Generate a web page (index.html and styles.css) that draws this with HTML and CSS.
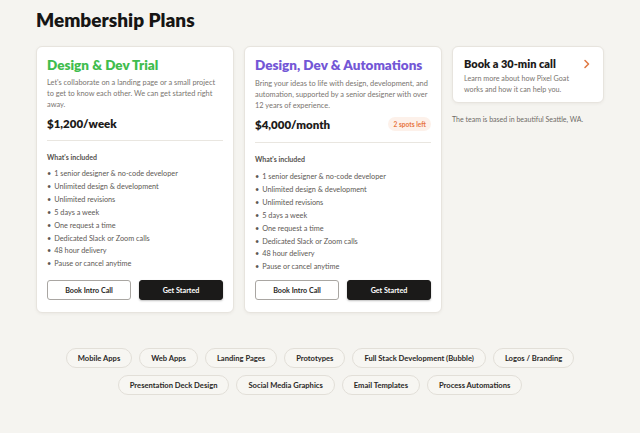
FILE: index.html
```html
<!DOCTYPE html>
<html lang="en">
<head>
<meta charset="utf-8">
<title>Membership Plans</title>
<link rel="stylesheet" href="styles.css">
</head>
<body>
<main class="page">
  <h1 class="page-title">Membership Plans</h1>
  <section class="plans">
    <article class="card plan">
      <h2 class="plan-name green">Design &amp; Dev Trial</h2>
      <p class="plan-desc">Let's collaborate on a landing page or a small project to get to know each other. We can get started right away.</p>
      <div class="price-row">
        <span class="price">$1,200/week</span>
      </div>
      <hr class="divider">
      <h3 class="incl">What's included</h3>
      <ul class="features">
        <li>1 senior designer &amp; no-code developer</li>
        <li>Unlimited design &amp; development</li>
        <li>Unlimited revisions</li>
        <li>5 days a week</li>
        <li>One request a time</li>
        <li>Dedicated Slack or Zoom calls</li>
        <li>48 hour delivery</li>
        <li>Pause or cancel anytime</li>
      </ul>
      <div class="actions">
        <button class="btn btn-outline">Book Intro Call</button>
        <button class="btn btn-dark">Get Started</button>
      </div>
    </article>
    <article class="card plan plan-featured">
      <h2 class="plan-name purple">Design, Dev &amp; Automations</h2>
      <p class="plan-desc">Bring your ideas to life with design, development, and automation, supported by a senior designer with over 12 years of experience.</p>
      <div class="price-row">
        <span class="price">$4,000/month</span>
        <span class="badge">2 spots left</span>
      </div>
      <hr class="divider">
      <h3 class="incl">What's included</h3>
      <ul class="features">
        <li>1 senior designer &amp; no-code developer</li>
        <li>Unlimited design &amp; development</li>
        <li>Unlimited revisions</li>
        <li>5 days a week</li>
        <li>One request a time</li>
        <li>Dedicated Slack or Zoom calls</li>
        <li>48 hour delivery</li>
        <li>Pause or cancel anytime</li>
      </ul>
      <div class="actions">
        <button class="btn btn-outline">Book Intro Call</button>
        <button class="btn btn-dark">Get Started</button>
      </div>
    </article>
    <aside class="side">
      <a class="card call" href="#">
        <div class="call-head">
          <span class="call-title">Book a 30-min call</span>
          <svg class="chev" width="8" height="10" viewBox="0 0 8 10" aria-hidden="true"><path d="M2 1.5 L5.5 5 L2 8.5" fill="none" stroke="#e07a45" stroke-width="1.6" stroke-linecap="round" stroke-linejoin="round"/></svg>
        </div>
        <p class="call-desc">Learn more about how Pixel Goat works and how it can help you.</p>
      </a>
      <p class="note">The team is based in beautiful Seattle, WA.</p>
    </aside>
  </section>
  <section class="tags">
    <div class="tag-row">
      <span class="tag">Mobile Apps</span>
      <span class="tag">Web Apps</span>
      <span class="tag">Landing Pages</span>
      <span class="tag">Prototypes</span>
      <span class="tag">Full Stack Development (Bubble)</span>
      <span class="tag">Logos / Branding</span>
    </div>
    <div class="tag-row">
      <span class="tag">Presentation Deck Design</span>
      <span class="tag">Social Media Graphics</span>
      <span class="tag">Email Templates</span>
      <span class="tag">Process Automations</span>
    </div>
  </section>
</main>
</body>
</html>
```
FILE: styles.css
```css
* { box-sizing: border-box; }
html, body { margin: 0; padding: 0; }
body {
  background: #f5f4f0;
  font-family: Lato, "Open Sans", sans-serif;
  color: #1d1b1a;
  width: 640px;
  height: 433px;
  overflow: hidden;
}
.page {
  padding: 9px 36px 0 36px;
}
.page-title {
  margin: 0;
  font-size: 19px;
  font-weight: 800;
  line-height: 22px;
  color: #161514;
}
.plans {
  margin-top: 15px;
  display: grid;
  grid-template-columns: 198px 198px 152px;
  gap: 10px;
  align-items: start;
}
.card {
  background: #fff;
  border: 1px solid #e7e4de;
  border-radius: 6px;
  box-shadow: 0 1px 3px rgba(60, 50, 30, 0.06);
}
.plan {
  padding: 10px 10px 12px 10px;
  display: flex;
  flex-direction: column;
  height: 267px;
}
.plan-featured .plan-desc { margin-top: 4px; }
.plan-featured .divider { margin-top: 10px; }
.plan-featured .features { margin-top: 8px; }
.plan-name {
  margin: 0;
  font-size: 13.5px;
  font-weight: 800;
  line-height: 17px;
}
.green { color: #3fbd4e; }
.purple { color: #7357d6; }
.plan-desc {
  margin: 3px 0 0 0;
  font-size: 7.4px;
  line-height: 11px;
  color: #7a7570;
}
.price-row {
  margin-top: 5px;
  display: flex;
  justify-content: space-between;
  align-items: center;
  height: 16px;
}
.price {
  font-size: 11.5px;
  font-weight: 800;
  color: #1d1b1a;
}
.badge {
  font-size: 6.6px;
  font-weight: 700;
  color: #e8763f;
  background: #fdf1ea;
  padding: 3px 5px;
  border-radius: 8px;
}
.divider {
  border: 0;
  border-top: 1px solid #e9e6e0;
  margin: 9px 0 0 0;
}
.incl {
  margin: 12px 0 0 0;
  font-size: 7px;
  font-weight: 700;
  color: #55514d;
}
.features {
  list-style: none;
  margin: 7px 0 0 0;
  padding: 0;
}
.features li {
  font-size: 7.3px;
  line-height: 12.9px;
  color: #5d5955;
}
.features li::before {
  content: "\2022";
  margin-right: 3px;
}
.actions {
  margin-top: auto;
  display: grid;
  grid-template-columns: 1fr 1fr;
  gap: 8px;
}
.btn {
  height: 20px;
  font-family: inherit;
  font-size: 7.2px;
  font-weight: 700;
  border-radius: 3px;
  cursor: pointer;
  padding: 0;
}
.btn-outline {
  background: #fff;
  color: #2a2826;
  border: 1px solid #a9a6a2;
}
.btn-dark {
  background: #1b1a19;
  color: #fff;
  border: 1px solid #1b1a19;
  box-shadow: 0 1px 2px rgba(0,0,0,0.25);
}
.side {
  display: flex;
  flex-direction: column;
}
.call {
  display: block;
  text-decoration: none;
  padding: 10px 11px 10px 11px;
  height: 57px;
}
.call-head {
  display: flex;
  justify-content: space-between;
  align-items: center;
}
.call-title {
  font-size: 11px;
  font-weight: 800;
  color: #1d1b1a;
}
.chev { margin-right: 1px; }
.call-desc {
  margin: 4px 22px 0 0;
  font-size: 7.2px;
  line-height: 10.5px;
  color: #7a7570;
}
.note {
  margin: 12px 0 0 0;
  font-size: 7px;
  color: #6f6b67;
}
.tags {
  margin: 35px -36px 0 -36px;
  display: flex;
  flex-direction: column;
  align-items: center;
  gap: 7px;
}
.tag-row {
  display: flex;
  justify-content: center;
  gap: 7px;
}
.tag {
  height: 20px;
  padding: 0 11px;
  display: inline-flex;
  align-items: center;
  border: 1px solid #e2dfd8;
  border-radius: 10px;
  background: #f7f6f2;
  font-size: 7.6px;
  font-weight: 700;
  color: #2a2826;
}
```
